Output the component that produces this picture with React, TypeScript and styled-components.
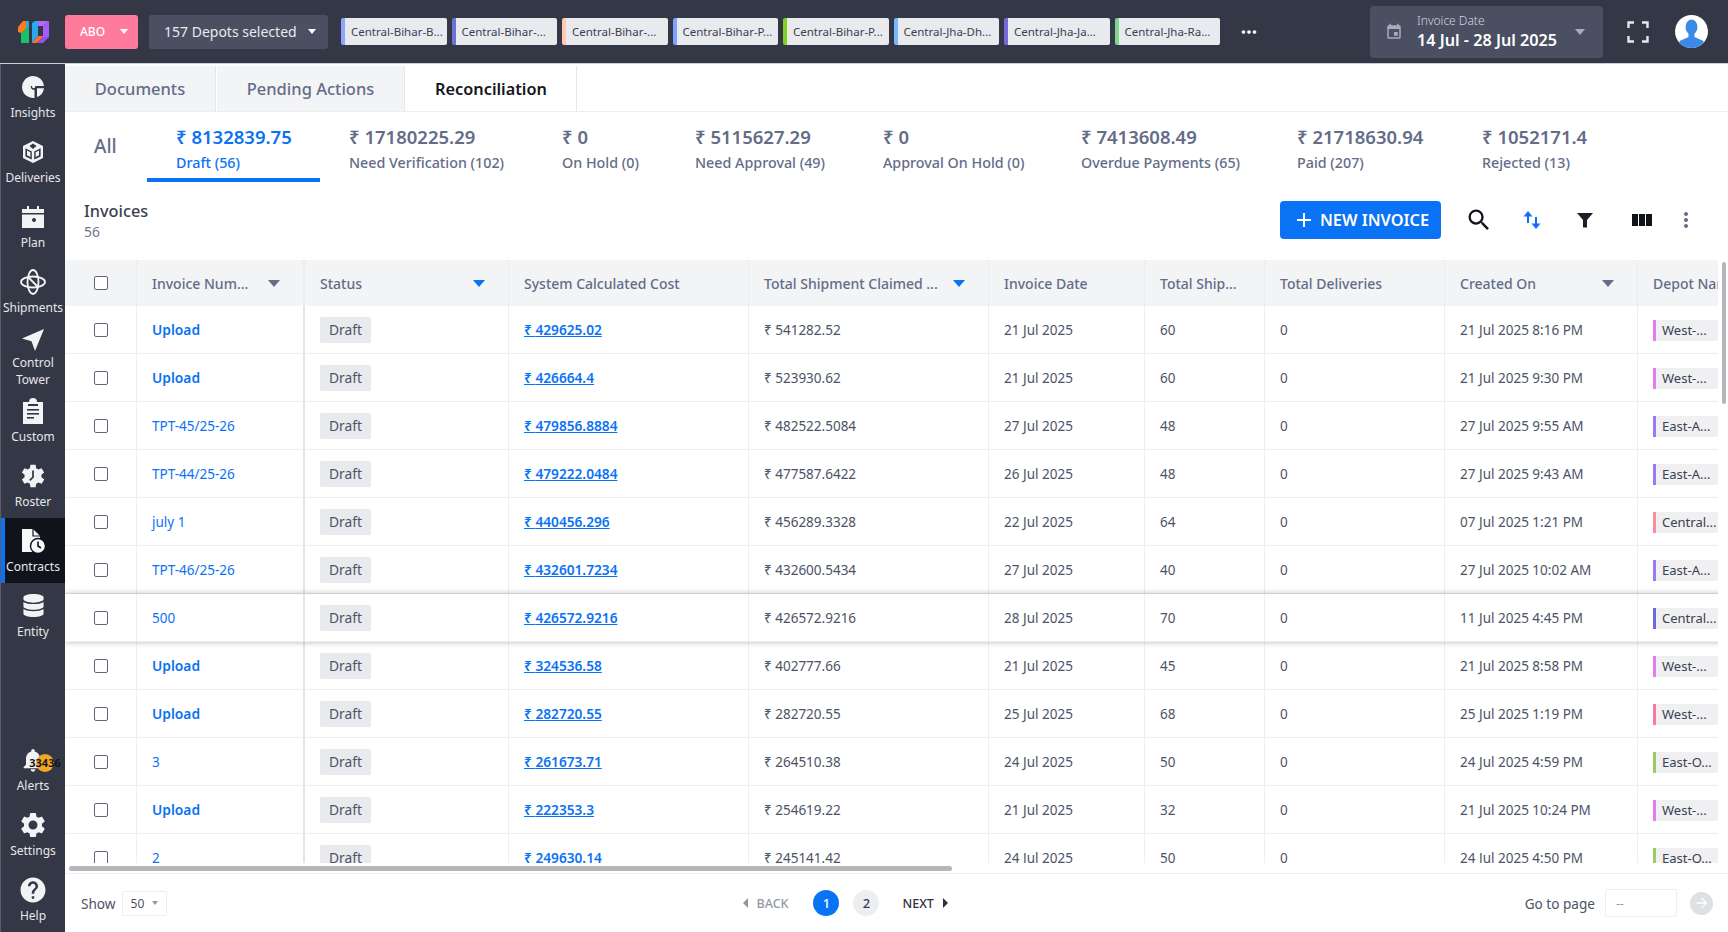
import React from 'react';
import styled, { createGlobalStyle } from 'styled-components';
import {
  MdAdd,
  MdArrowForward,
  MdEvent,
  MdHelp,
  MdMoreVert,
  MdMoreHoriz,
  MdNotifications,
  MdSearch,
  MdSettings,
} from 'react-icons/md';
import { FaDatabase } from 'react-icons/fa';

const GlobalStyle = createGlobalStyle`
  html, body {
    margin: 0;
    padding: 0;
    height: 100%;
    overflow: hidden;
    background: #fff;
  }
  body {
    font-family: "Noto Sans", "Liberation Sans", sans-serif;
    color: #4d5366;
  }
  * { box-sizing: border-box; }
`;

/* ---------- icons ---------- */

const Logo = () => (
  <svg width="31" height="23" viewBox="0 0 31 23">
    <polygon points="0,7 5,1 8,1 8,9 3,13 0,12" fill="#ff7a1a" />
    <polygon points="5,1 11,1 11,8 8,9 8,1" fill="#29a9e8" />
    <polygon points="3,13 8,9 11,8 11,23 3,23" fill="#18c26a" />
    <polygon points="14,3 17,1 20,1 20,16 14,23" fill="#2aa8f0" />
    <polygon points="17,1 31,1 25,6 20,6 20,1" fill="#b06cf5" />
    <polygon points="25,6 31,1 31,17 25,17" fill="#a45cff" />
    <polygon points="20,16 25,16 25,17 19,23 14,23" fill="#ff6b2c" />
    <polygon points="25,17 31,17 25,23 19,23" fill="#8f54ee" />
  </svg>
);

const InsightsIcon = () => (
  <svg width="24" height="24" viewBox="0 0 24 24" fill="#f2f3f5">
    <path d="M12 1a11 11 0 1 0 1.500 21.900v-8.200a3 3 0 0 1-3.600-3.700L12 11h11A11 11 0 0 0 12 1z" />
    <path d="M16 13.200h7a11 11 0 0 1-7 8.900z" />
    <circle cx="12.600" cy="11.600" r="1.600" />
  </svg>
);

const DeliveriesIcon = () => (
  <svg width="24" height="24" viewBox="0 0 24 24" fill="#f2f3f5">
    <path d="M12 1 2 6v12l10 5 10-5V6zm0 2.600L15.500 6 12 9 8.500 6zM4.400 8.200l6.400 3.400v8L4.400 16.400zm15.200 8.200-6.400 3.200v-8l6.400-3.400z" />
    <path d="M6 10.500l3.400 1.800v4.600L6 15.200zM18 10.500l-3.400 1.800v4.600l3.400-1.700z" />
  </svg>
);

const PlanIcon = () => (
  <svg width="24" height="24" viewBox="0 0 24 24" fill="#f2f3f5">
    <rect x="6" y="1" width="2" height="4" />
    <rect x="16" y="1" width="2" height="4" />
    <path d="M1 4h22v4H1z" />
    <path fillRule="evenodd" d="M1 9.500h22V23H1zM15 15a2 2 0 1 0 0 .01z" />
  </svg>
);

const ShipmentsIcon = () => (
  <svg width="28" height="28" viewBox="0 0 28 28" fill="none" stroke="#f2f3f5" strokeWidth="1.800">
    <ellipse cx="14" cy="14" rx="5.500" ry="12" />
    <ellipse cx="14" cy="14" rx="12" ry="5.500" />
    <path d="M9 9l10 10" />
  </svg>
);

const TowerIcon = () => (
  <svg width="24" height="24" viewBox="0 0 24 24" fill="#f2f3f5">
    <path d="M23 1 1 10.500l9.500 2.800L14 23z" />
  </svg>
);

const CustomIcon = () => (
  <svg width="24" height="26" viewBox="0 0 24 26">
    <path d="M2 4h6a4 4 0 0 1 8 0h6v22H2z" fill="#f2f3f5" />
    <rect x="7" y="6" width="10" height="2" fill="#343846" />
    <rect x="6" y="11" width="12" height="1.600" fill="#343846" />
    <rect x="6" y="15" width="12" height="1.600" fill="#343846" />
    <rect x="6" y="19" width="7" height="1.600" fill="#343846" />
  </svg>
);

const RosterIcon = () => (
  <svg width="26" height="26" viewBox="0 0 24 24">
    <path
      fill="#f2f3f5"
      d="M19.400 13a7.800 7.800 0 0 0 0-2l2.100-1.600-2-3.400-2.500 1a7.600 7.600 0 0 0-1.700-1L15 3.300h-4l-.4 2.700a7.600 7.600 0 0 0-1.700 1l-2.500-1-2 3.400L6.500 11a7.800 7.800 0 0 0 0 2l-2.100 1.600 2 3.400 2.500-1a7.600 7.600 0 0 0 1.700 1l.4 2.700h4l.4-2.700a7.600 7.600 0 0 0 1.700-1l2.500 1 2-3.400z"
      transform="translate(12 12) scale(1.200) translate(-12.950 -12)"
    />
    <path d="M12 7v6l-3 3" fill="none" stroke="#343846" strokeWidth="1.600" />
  </svg>
);

const ContractsIcon = () => (
  <svg width="26" height="26" viewBox="0 0 26 26">
    <path d="M2 1h11l7 7v16H2z" fill="#f7f8f9" />
    <path d="M13 1v7h7" fill="none" stroke="#10131a" strokeWidth="1.200" />
    <circle cx="18" cy="18" r="7.500" fill="#f7f8f9" stroke="#10131a" strokeWidth="1.400" />
    <path d="M18 13.500V18l3 2" fill="none" stroke="#10131a" strokeWidth="1.600" />
  </svg>
);

const SortIcon = () => (
  <svg width="20" height="20" viewBox="0 0 20 20" fill="#0a72f5">
    <path d="M6 1 1.500 6.500H5V13h2V6.500h3.500zM14 19l4.500-5.500H15V7h-2v6.500H9.500z" />
  </svg>
);

const FunnelIcon = () => (
  <svg width="18" height="18" viewBox="0 0 18 18" fill="#1c1f26">
    <path d="M1 2h16l-6 7v7.500H7V9z" />
  </svg>
);

const ColumnsIcon = () => (
  <svg width="20" height="14" viewBox="0 0 20 14" fill="#10131a">
    <rect x="0" y="1" width="6" height="12" />
    <rect x="7" y="1" width="6" height="12" />
    <rect x="14" y="1" width="6" height="12" />
  </svg>
);

const FullscreenIcon = () => (
  <svg width="22" height="22" viewBox="0 0 22 22" fill="none" stroke="#e6e7ea" strokeWidth="2.400">
    <path d="M1.500 7V1.500H7M15 1.500h5.500V7M20.500 15v5.500H15M7 20.500H1.500V15" />
  </svg>
);

const AvatarIcon = () => (
  <svg width="33" height="33" viewBox="0 0 33 33">
    <defs>
      <clipPath id="avatar-clip">
        <circle cx="16.500" cy="16.500" r="16.500" />
      </clipPath>
    </defs>
    <g clipPath="url(#avatar-clip)">
      <rect width="33" height="33" fill="#fff" />
      <ellipse cx="16.500" cy="12" rx="6" ry="7.500" fill="#3c8ae8" />
      <path d="M13.500 18h6v4l9 4v8h-24v-8l9-4z" fill="#3c8ae8" />
    </g>
  </svg>
);

/* ---------- shell ---------- */

const Page = styled.div`
  width: 100vw;
  height: 100vh;
  display: flex;
  flex-direction: column;
  overflow: hidden;
`;

const TopBar = styled.header`
  height: 64px;
  flex: none;
  display: flex;
  align-items: center;
  background: #343846;
  padding-left: 18px;
  border-bottom: 1px solid #c9ccd3;
`;

const LogoSlot = styled.div`
  width: 47px;
  display: flex;
  align-items: center;
`;

const BrandButton = styled.div`
  width: 73px;
  height: 34px;
  display: flex;
  align-items: center;
  justify-content: space-between;
  padding: 0 10px 0 15px;
  background: #ff7b9b;
  border-radius: 3px;
  color: #fff;
  font-size: 12px;
  font-weight: 500;
`;

const DepotButton = styled.div`
  width: 179px;
  height: 34px;
  margin-left: 11px;
  display: flex;
  align-items: center;
  justify-content: space-between;
  padding: 0 12px 0 15px;
  background: #4a4f62;
  border-radius: 3px;
  color: #e9eaee;
  font-size: 14px;
`;

const Caret = styled.span<{ $color?: string; $size?: number }>`
  display: inline-block;
  width: 0;
  height: 0;
  flex: none;
  border-left: ${({ $size }) => $size ?? 4}px solid transparent;
  border-right: ${({ $size }) => $size ?? 4}px solid transparent;
  border-top: ${({ $size }) => ($size ?? 4) + 1}px solid ${({ $color }) => $color ?? '#fff'};
`;

const DepotChips = styled.div`
  display: flex;
  gap: 5px;
  margin-left: 13px;
`;

const DepotChip = styled.div<{ $bar: string }>`
  width: 105.500px;
  height: 27px;
  padding-left: 6px;
  display: flex;
  align-items: center;
  background: #e9eaee;
  border-left: 4px solid ${({ $bar }) => $bar};
  border-radius: 2px;
  color: #3a3f4e;
  font-size: 11.500px;
  white-space: nowrap;
  overflow: hidden;
`;

const MoreDots = styled.div`
  margin-left: 18px;
  width: 24px;
  display: flex;
  color: #fff;
  font-size: 22px;
`;

const DateBox = styled.div`
  margin-left: 108px;
  width: 233px;
  height: 52px;
  flex: none;
  display: flex;
  align-items: center;
  padding: 0 18px 0 15px;
  background: #4a4f62;
  border-radius: 4px;
  color: #a9adb9;
  font-size: 18px;
`;

const DateText = styled.div`
  margin-left: 14px;
  flex: 1;
  display: flex;
  flex-direction: column;
`;

const DateLabel = styled.span`
  font-size: 12px;
  line-height: 16px;
  font-weight: 300;
  color: #d3d5dc;
`;

const DateValue = styled.span`
  font-size: 16.200px;
  line-height: 22px;
  font-weight: 600;
  color: #fff;
`;

const TopIconSlot = styled.div`
  margin-left: 24px;
  width: 22px;
  display: flex;
  flex: none;
`;

const AvatarSlot = styled.div`
  margin-left: 26px;
  display: flex;
`;

const Body = styled.div`
  flex: 1;
  min-height: 0;
  display: flex;
`;

const Sidebar = styled.nav`
  width: 65px;
  flex: none;
  display: flex;
  flex-direction: column;
  justify-content: space-between;
  background: #343846;
  border-left: 1px solid #5a5e6b;
`;

const NavGroup = styled.div`
  display: flex;
  flex-direction: column;
`;

const NavItem = styled.div<{ $active?: boolean; $tall?: boolean }>`
  position: relative;
  height: ${({ $tall }) => ($tall ? 64 : 65)}px;
  display: flex;
  flex-direction: column;
  align-items: center;
  padding-top: ${({ $tall }) => ($tall ? 2 : 9)}px;
  background: ${({ $active }) => ($active ? '#10131a' : 'transparent')};
  border-left: 4px solid ${({ $active }) => ($active ? '#0a72f5' : 'transparent')};
  color: #e6e7ea;
  font-size: 12px;
  line-height: 17px;
  text-align: center;
`;

const NavIcon = styled.div`
  height: 27px;
  display: flex;
  align-items: center;
  justify-content: center;
  margin-left: -4px;
  color: #f2f3f5;
`;

const NavLabel = styled.span<{ $tight?: boolean }>`
  margin-left: -4px;
  margin-top: ${({ $tight }) => ($tight ? 1 : 4)}px;
`;

const AlertBadge = styled.span`
  position: absolute;
  top: 17px;
  left: 31px;
  width: 18px;
  height: 18px;
  border-radius: 50%;
  background: #f5a623;
  color: #14161c;
  font-size: 11px;
  font-weight: 700;
  line-height: 18px;
  display: flex;
  justify-content: center;
  white-space: nowrap;
`;

const Main = styled.main`
  flex: 1;
  min-width: 0;
  display: flex;
  flex-direction: column;
`;

/* ---------- tabs and summary ---------- */

const TabBar = styled.div`
  height: 48px;
  flex: none;
  display: flex;
  gap: 1px;
  padding-top: 2px;
  border-bottom: 1px solid #eceef1;
`;

const Tab = styled.div<{ $active?: boolean; $width: number }>`
  width: ${({ $width }) => $width}px;
  display: flex;
  align-items: center;
  justify-content: center;
  background: ${({ $active }) => ($active ? '#fff' : '#f3f4f6')};
  border-right: 1px solid #e6e7eb;
  color: ${({ $active }) => ($active ? '#14161c' : '#646c88')};
  font-size: ${({ $active }) => ($active ? 16.300 : 16.500)}px;
  font-weight: ${({ $active }) => ($active ? 600 : 500)};
`;

const SummaryRow = styled.div`
  height: 70px;
  flex: none;
  display: flex;
`;

const AllLabel = styled.div`
  width: 82px;
  padding-left: 29px;
  padding-top: 21px;
  color: #646c88;
  font-size: 19px;
  font-weight: 500;
`;

const SummaryTab = styled.div<{ $active?: boolean; $width: number }>`
  width: ${({ $width }) => $width}px;
  height: 70px;
  flex: none;
  padding: 12px 0 0 29px;
  border-bottom: 4px solid ${({ $active }) => ($active ? '#0a72f5' : 'transparent')};
  color: ${({ $active }) => ($active ? '#0a72f5' : '#646c88')};
  white-space: nowrap;
`;

const Amount = styled.div`
  font-size: 18.500px;
  line-height: 26px;
  font-weight: 600;
`;

const AmountLabel = styled.div`
  margin-top: 2px;
  font-size: 14.300px;
  line-height: 22px;
  font-weight: 500;
`;

const TableHeading = styled.div`
  height: 78px;
  flex: none;
  display: flex;
  align-items: center;
  padding: 0 17px 0 19px;
`;

const HeadingText = styled.div`
  flex: 1;
`;

const HeadingTitle = styled.div`
  color: #3a3f4e;
  font-size: 16.300px;
  line-height: 22px;
  font-weight: 500;
`;

const HeadingCount = styled.div`
  color: #6f7689;
  font-size: 14px;
  line-height: 20px;
`;

const NewInvoice = styled.div`
  width: 161px;
  height: 38px;
  margin-top: -2px;
  display: flex;
  align-items: center;
  justify-content: center;
  gap: 4px;
  background: #0a72f5;
  border-radius: 4px;
  color: #fff;
  font-size: 16.300px;
  font-weight: 600;
`;

const ActionIcon = styled.div<{ $width: number }>`
  width: ${({ $width }) => $width}px;
  display: flex;
  justify-content: center;
  margin-top: -2px;
`;

/* ---------- table ---------- */

const columns = '72px 168px 204px 240px 240px 156px 120px 180px 193px 200px';

const TableFrame = styled.div`
  position: relative;
  flex: 1;
  min-height: 0;
  overflow: hidden;
  display: flex;
  flex-direction: column;
`;

const TableClip = styled.div`
  flex: 1;
  min-height: 0;
  margin-right: 10px;
  overflow: hidden;
`;

const HeaderRow = styled.div`
  display: grid;
  grid-template-columns: ${columns};
  width: 1773px;
  height: 46px;
  background: #f3f4f6;
`;

const BodyRow = styled.div<{ $raised?: boolean }>`
  position: relative;
  z-index: ${({ $raised }) => ($raised ? 1 : 0)};
  display: grid;
  grid-template-columns: ${columns};
  width: 1773px;
  height: 48px;
  background: #fff;
  border-bottom: 1px solid #eceef1;
  box-shadow: ${({ $raised }) => ($raised ? '0 0 6px rgba(40, 44, 60, 0.35)' : 'none')};
`;

const Cell = styled.div<{ $frozen?: boolean; $center?: boolean }>`
  display: flex;
  align-items: center;
  justify-content: ${({ $center }) => ($center ? 'center' : 'flex-start')};
  padding-left: ${({ $center }) => ($center ? 0 : 15)}px;
  border-right: ${({ $frozen }) => ($frozen ? '2px solid #e3e5e9' : '1px solid #eceef1')};
  color: #4d5366;
  font-size: 13.500px;
  white-space: nowrap;
  overflow: hidden;
`;

const HeadCell = styled(Cell)`
  justify-content: ${({ $center }) => ($center ? 'center' : 'space-between')};
  color: #646c88;
  font-size: 14px;
  font-weight: 500;
  padding-right: ${({ $center }) => ($center ? 0 : 23)}px;
  border-right-color: #e9ebee;
`;

const Checkbox = styled.span`
  width: 14px;
  height: 14px;
  border: 1.500px solid #5f667e;
  border-radius: 2px;
  background: #fff;
`;

const InvoiceLink = styled.span<{ $upload?: boolean }>`
  color: #0a72f5;
  font-size: ${({ $upload }) => ($upload ? 13.800 : 13.500)}px;
  font-weight: ${({ $upload }) => ($upload ? 600 : 400)};
`;

const CostLink = styled.span`
  color: #0a72f5;
  font-size: 13.700px;
  font-weight: 600;
  text-decoration: underline;
`;

const StatusChip = styled.span`
  width: 51px;
  height: 26px;
  display: flex;
  align-items: center;
  justify-content: center;
  background: #e9eaee;
  border-radius: 2px;
  color: #4d5366;
  font-size: 13.800px;
`;

const RowDepot = styled.span<{ $bar: string }>`
  width: 66px;
  height: 21px;
  margin-top: 1px;
  padding-left: 6px;
  display: flex;
  align-items: center;
  background: #f0f0f2;
  border-left: 3px solid ${({ $bar }) => $bar};
  color: #3a3f4e;
  font-size: 13px;
`;

const ScrollThumbY = styled.div`
  position: absolute;
  top: 2px;
  right: 2px;
  width: 4px;
  height: 142px;
  border-radius: 2px;
  background: #b5b6b9;
`;

const ScrollTrack = styled.div`
  height: 11px;
  flex: none;
  padding: 3px 0 0 4px;
  border-bottom: 1px solid #eceef1;
`;

const ScrollThumbX = styled.div`
  width: 883px;
  height: 5px;
  border-radius: 3px;
  background: #b5b6b9;
`;

/* ---------- footer ---------- */

const Footer = styled.div`
  height: 58px;
  flex: none;
  display: flex;
  align-items: center;
  padding: 0 15px 0 16px;
  color: #4d5366;
  font-size: 13.600px;
`;

const PageSize = styled.div`
  width: 45px;
  height: 25px;
  margin-left: 6px;
  display: flex;
  align-items: center;
  justify-content: space-between;
  padding: 0 8px;
  border: 1px solid #eceef1;
  border-radius: 2px;
  font-size: 12px;
`;

const Pager = styled.div`
  margin-left: 576px;
  display: flex;
  align-items: center;
`;

const PagerText = styled.span<{ $muted?: boolean }>`
  display: flex;
  align-items: center;
  gap: 9px;
  color: ${({ $muted }) => ($muted ? '#9297a6' : '#2f333f')};
  font-size: 12.500px;
  font-weight: 500;
`;

const SideCaret = styled.span<{ $dir: 'left' | 'right'; $color: string }>`
  width: 0;
  height: 0;
  border-top: 5px solid transparent;
  border-bottom: 5px solid transparent;
  ${({ $dir, $color }) =>
    $dir === 'left' ? `border-right: 5px solid ${$color};` : `border-left: 5px solid ${$color};`}
`;

const PageDot = styled.span<{ $active?: boolean }>`
  width: 26px;
  height: 26px;
  border-radius: 50%;
  display: flex;
  align-items: center;
  justify-content: center;
  background: ${({ $active }) => ($active ? '#0a72f5' : '#eceef1')};
  color: ${({ $active }) => ($active ? '#fff' : '#3a3f4e')};
  font-size: 13px;
  font-weight: 500;
`;

const DotRow = styled.div`
  display: flex;
  gap: 14px;
  margin: 0 23px 0 25px;
`;

const GoTo = styled.div`
  margin-left: auto;
  display: flex;
  align-items: center;
`;

const GoInput = styled.div`
  width: 72px;
  height: 28px;
  margin-left: 10px;
  padding-left: 10px;
  display: flex;
  align-items: center;
  border: 1px solid #eceef1;
  border-radius: 2px;
  color: #9297a6;
  font-size: 12px;
`;

const GoArrow = styled.div`
  width: 23px;
  height: 23px;
  margin-left: 13px;
  border-radius: 50%;
  display: flex;
  align-items: center;
  justify-content: center;
  background: #dfe0e3;
  color: #fff;
  font-size: 16px;
`;

/* ---------- data ---------- */

const topChips = [
  { name: 'Central-Bihar-B...', bar: '#8aa6ff' },
  { name: 'Central-Bihar-...', bar: '#6a74d8' },
  { name: 'Central-Bihar-...', bar: '#ffc9b5' },
  { name: 'Central-Bihar-P...', bar: '#7ea0ff' },
  { name: 'Central-Bihar-P...', bar: '#7ed321' },
  { name: 'Central-Jha-Dh...', bar: '#73b9ff' },
  { name: 'Central-Jha-Ja...', bar: '#7b68d8' },
  { name: 'Central-Jha-Ra...', bar: '#7ed78a' },
];

const summary = [
  { amount: '₹ 8132839.75', label: 'Draft (56)', width: 173, active: true },
  { amount: '₹ 17180225.29', label: 'Need Verification (102)', width: 213 },
  { amount: '₹ 0', label: 'On Hold (0)', width: 133 },
  { amount: '₹ 5115627.29', label: 'Need Approval (49)', width: 188 },
  { amount: '₹ 0', label: 'Approval On Hold (0)', width: 198 },
  { amount: '₹ 7413608.49', label: 'Overdue Payments (65)', width: 216 },
  { amount: '₹ 21718630.94', label: 'Paid (207)', width: 185 },
  { amount: '₹ 1052171.4', label: 'Rejected (13)', width: 170 },
];

const heads: { label: string; caret?: string; frozen?: boolean }[] = [
  { label: 'Invoice Num...', caret: '#646c88', frozen: true },
  { label: 'Status', caret: '#0a72f5' },
  { label: 'System Calculated Cost' },
  { label: 'Total Shipment Claimed ...', caret: '#0a72f5' },
  { label: 'Invoice Date' },
  { label: 'Total Ship...' },
  { label: 'Total Deliveries' },
  { label: 'Created On', caret: '#646c88' },
  { label: 'Depot Name' },
];

const rows = [
  { inv: 'Upload', cost: '429625.02', claimed: '541282.52', date: '21 Jul 2025', ship: 60, created: '21 Jul 2025 8:16 PM', depot: 'West-...', bar: '#e57cf0' },
  { inv: 'Upload', cost: '426664.4', claimed: '523930.62', date: '21 Jul 2025', ship: 60, created: '21 Jul 2025 9:30 PM', depot: 'West-...', bar: '#e57cf0' },
  { inv: 'TPT-45/25-26', cost: '479856.8884', claimed: '482522.5084', date: '27 Jul 2025', ship: 48, created: '27 Jul 2025 9:55 AM', depot: 'East-A...', bar: '#9b7bf5' },
  { inv: 'TPT-44/25-26', cost: '479222.0484', claimed: '477587.6422', date: '26 Jul 2025', ship: 48, created: '27 Jul 2025 9:43 AM', depot: 'East-A...', bar: '#9b7bf5' },
  { inv: 'july 1', cost: '440456.296', claimed: '456289.3328', date: '22 Jul 2025', ship: 64, created: '07 Jul 2025 1:21 PM', depot: 'Central...', bar: '#ff8a9a' },
  { inv: 'TPT-46/25-26', cost: '432601.7234', claimed: '432600.5434', date: '27 Jul 2025', ship: 40, created: '27 Jul 2025 10:02 AM', depot: 'East-A...', bar: '#9b7bf5' },
  { inv: '500', cost: '426572.9216', claimed: '426572.9216', date: '28 Jul 2025', ship: 70, created: '11 Jul 2025 4:45 PM', depot: 'Central...', bar: '#6a6ae0', raised: true },
  { inv: 'Upload', cost: '324536.58', claimed: '402777.66', date: '21 Jul 2025', ship: 45, created: '21 Jul 2025 8:58 PM', depot: 'West-...', bar: '#e57cf0' },
  { inv: 'Upload', cost: '282720.55', claimed: '282720.55', date: '25 Jul 2025', ship: 68, created: '25 Jul 2025 1:19 PM', depot: 'West-...', bar: '#f77ca0' },
  { inv: '3', cost: '261673.71', claimed: '264510.38', date: '24 Jul 2025', ship: 50, created: '24 Jul 2025 4:59 PM', depot: 'East-O...', bar: '#9ccc65' },
  { inv: 'Upload', cost: '222353.3', claimed: '254619.22', date: '21 Jul 2025', ship: 32, created: '21 Jul 2025 10:24 PM', depot: 'West-...', bar: '#e57cf0' },
  { inv: '2', cost: '249630.14', claimed: '245141.42', date: '24 Jul 2025', ship: 50, created: '24 Jul 2025 4:50 PM', depot: 'East-O...', bar: '#9ccc65' },
];

const App = () => (
  <Page>
    <GlobalStyle />
    <TopBar>
      <LogoSlot>
        <Logo />
      </LogoSlot>
      <BrandButton>
        ABO
        <Caret />
      </BrandButton>
      <DepotButton>
        157 Depots selected
        <Caret />
      </DepotButton>
      <DepotChips>
        {topChips.map((chip, i) => (
          <DepotChip key={i} $bar={chip.bar}>
            {chip.name}
          </DepotChip>
        ))}
      </DepotChips>
      <MoreDots>
        <MdMoreHoriz />
      </MoreDots>
      <DateBox>
        <MdEvent />
        <DateText>
          <DateLabel>Invoice Date</DateLabel>
          <DateValue>14 Jul - 28 Jul 2025</DateValue>
        </DateText>
        <Caret $color="#a9adb9" $size={5} />
      </DateBox>
      <TopIconSlot>
        <FullscreenIcon />
      </TopIconSlot>
      <AvatarSlot>
        <AvatarIcon />
      </AvatarSlot>
    </TopBar>

    <Body>
      <Sidebar>
        <NavGroup>
          <NavItem>
            <NavIcon><InsightsIcon /></NavIcon>
            <NavLabel>Insights</NavLabel>
          </NavItem>
          <NavItem>
            <NavIcon><DeliveriesIcon /></NavIcon>
            <NavLabel>Deliveries</NavLabel>
          </NavItem>
          <NavItem>
            <NavIcon><PlanIcon /></NavIcon>
            <NavLabel>Plan</NavLabel>
          </NavItem>
          <NavItem>
            <NavIcon><ShipmentsIcon /></NavIcon>
            <NavLabel>Shipments</NavLabel>
          </NavItem>
          <NavItem $tall>
            <NavIcon><TowerIcon /></NavIcon>
            <NavLabel $tight>Control<br />Tower</NavLabel>
          </NavItem>
          <NavItem>
            <NavIcon><CustomIcon /></NavIcon>
            <NavLabel>Custom</NavLabel>
          </NavItem>
          <NavItem>
            <NavIcon><RosterIcon /></NavIcon>
            <NavLabel>Roster</NavLabel>
          </NavItem>
          <NavItem $active>
            <NavIcon><ContractsIcon /></NavIcon>
            <NavLabel>Contracts</NavLabel>
          </NavItem>
          <NavItem>
            <NavIcon><FaDatabase size={23} /></NavIcon>
            <NavLabel>Entity</NavLabel>
          </NavItem>
        </NavGroup>
        <NavGroup>
          <NavItem>
            <NavIcon><MdNotifications size={28} /></NavIcon>
            <NavLabel>Alerts</NavLabel>
            <AlertBadge>33436</AlertBadge>
          </NavItem>
          <NavItem>
            <NavIcon><MdSettings size={30} /></NavIcon>
            <NavLabel>Settings</NavLabel>
          </NavItem>
          <NavItem>
            <NavIcon><MdHelp size={30} /></NavIcon>
            <NavLabel>Help</NavLabel>
          </NavItem>
        </NavGroup>
      </Sidebar>

      <Main>
        <TabBar>
          <Tab $width={151}>Documents</Tab>
          <Tab $width={188}>Pending Actions</Tab>
          <Tab $width={171} $active>Reconciliation</Tab>
        </TabBar>

        <SummaryRow>
          <AllLabel>All</AllLabel>
          {summary.map((item, i) => (
            <SummaryTab key={i} $active={item.active} $width={item.width}>
              <Amount>{item.amount}</Amount>
              <AmountLabel>{item.label}</AmountLabel>
            </SummaryTab>
          ))}
        </SummaryRow>

        <TableHeading>
          <HeadingText>
            <HeadingTitle>Invoices</HeadingTitle>
            <HeadingCount>56</HeadingCount>
          </HeadingText>
          <NewInvoice>
            <MdAdd size={24} />
            NEW INVOICE
          </NewInvoice>
          <ActionIcon $width={76}><MdSearch size={28} color="#10131a" /></ActionIcon>
          <ActionIcon $width={30}><SortIcon /></ActionIcon>
          <ActionIcon $width={76}><FunnelIcon /></ActionIcon>
          <ActionIcon $width={38}><ColumnsIcon /></ActionIcon>
          <ActionIcon $width={50}><MdMoreVert size={24} color="#646c88" /></ActionIcon>
        </TableHeading>

        <TableFrame>
          <TableClip>
            <HeaderRow>
              <HeadCell $center>
                <Checkbox />
              </HeadCell>
              {heads.map((head, i) => (
                <HeadCell key={i} $frozen={head.frozen}>
                  {head.label}
                  {head.caret && <Caret $color={head.caret} $size={6} />}
                </HeadCell>
              ))}
            </HeaderRow>
            {rows.map((row, i) => (
              <BodyRow key={i} $raised={row.raised}>
                <Cell $center><Checkbox /></Cell>
                <Cell $frozen>
                  <InvoiceLink $upload={row.inv === 'Upload'}>{row.inv}</InvoiceLink>
                </Cell>
                <Cell><StatusChip>Draft</StatusChip></Cell>
                <Cell><CostLink>₹ {row.cost}</CostLink></Cell>
                <Cell>₹ {row.claimed}</Cell>
                <Cell>{row.date}</Cell>
                <Cell>{row.ship}</Cell>
                <Cell>0</Cell>
                <Cell>{row.created}</Cell>
                <Cell><RowDepot $bar={row.bar}>{row.depot}</RowDepot></Cell>
              </BodyRow>
            ))}
          </TableClip>
          <ScrollThumbY />
          <ScrollTrack>
            <ScrollThumbX />
          </ScrollTrack>
        </TableFrame>

        <Footer>
          Show
          <PageSize>
            50
            <Caret $color="#9297a6" $size={3} />
          </PageSize>
          <Pager>
            <PagerText $muted>
              <SideCaret $dir="left" $color="#9297a6" />
              BACK
            </PagerText>
            <DotRow>
              <PageDot $active>1</PageDot>
              <PageDot>2</PageDot>
            </DotRow>
            <PagerText>
              NEXT
              <SideCaret $dir="right" $color="#2f333f" />
            </PagerText>
          </Pager>
          <GoTo>
            Go to page
            <GoInput>--</GoInput>
            <GoArrow><MdArrowForward /></GoArrow>
          </GoTo>
        </Footer>
      </Main>
    </Body>
  </Page>
);

export default App;
